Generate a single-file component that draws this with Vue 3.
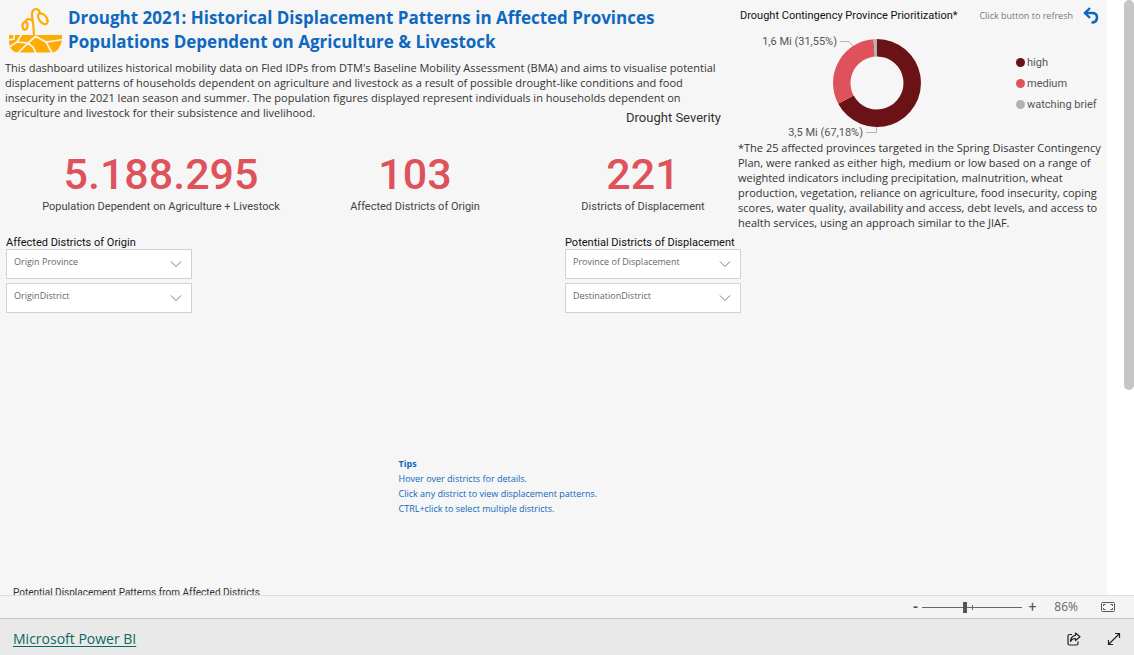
<script setup>
import { ref } from 'vue'

const metrics = [
  { value: '5.188.295', label: 'Population Dependent on Agriculture + Livestock' },
  { value: '103', label: 'Affected Districts of Origin' },
  { value: '221', label: 'Districts of Displacement' },
]

const slicerGroups = [
  {
    title: 'Affected Districts of Origin',
    fields: [
      { id: 'origin-province', name: 'Origin Province' },
      { id: 'origin-district', name: 'OriginDistrict' },
    ],
  },
  {
    title: 'Potential Districts of Displacement',
    fields: [
      { id: 'displacement-province', name: 'Province of Displacement' },
      { id: 'destination-district', name: 'DestinationDistrict' },
    ],
  },
]

const segments = [
  { name: 'high', from: 0, to: 67.18, color: '#6b1216' },
  { name: 'medium', from: 67.18, to: 98.73, color: '#de535b' },
  { name: 'watching brief', from: 98.73, to: 100, color: '#b3b3b3' },
]

const center = { x: 139, y: 55 }

function point(percent, radius) {
  const angle = (percent / 100) * 2 * Math.PI
  return `${center.x + radius * Math.sin(angle)} ${center.y - radius * Math.cos(angle)}`
}

function ringSlice({ from, to }, outer = 44, inner = 26.5) {
  const large = to - from > 50 ? 1 : 0
  return `M${point(from, outer)}A${outer} ${outer} 0 ${large} 1 ${point(to, outer)}`
    + `L${point(to, inner)}A${inner} ${inner} 0 ${large} 0 ${point(from, inner)}Z`
}

const zoom = ref(86)
</script>

<template>
  <div class="app">
    <main class="viewport">
      <div class="canvas">
        <section class="primary">
          <header class="heading">
            <svg class="logo" viewBox="0 0 55 48" aria-hidden="true">
              <g fill="none" stroke="#ffab00" stroke-width="2.200" stroke-linecap="round">
                <path d="M26 29C26 21 24.500 15 24 10C23.500 5 25.500 3 28 3C30.500 3 31.500 5 32 7.500" />
                <path d="M24 14.500C21 12 17.500 13 17.500 16.500" />
                <path d="M31.500 7.500C36 7 40.500 12 39.500 16.500C38.500 19.500 34 18 31.500 14.500C29.500 11 29.500 8 31.500 7.500Z" />
                <path d="M17.500 15.500C20.500 17.500 20 22 17.500 23.500C15.500 24.500 14.500 22 14.500 19.500C14.500 17.500 16 16 17.500 15.500Z" />
              </g>
              <path d="M1 29H54V34C53 40 49 46.500 44 46.500H10C5 46.500 1 42 1 35Z" fill="#ffab00" />
              <path
                d="M0 34L6 33L6 29M14 28L9 36L0 42M9 36L20 37M28 30L20 37L10 47M20 37L25 41L28 47M27 30L38 36L55 33.500M38 36L44 47"
                fill="none" stroke="#f5f5f5" stroke-width="1.700"
              />
            </svg>
            <h1>Drought 2021: Historical Displacement Patterns in Affected Provinces<br>Populations Dependent on Agriculture &amp; Livestock</h1>
          </header>

          <p class="intro">
            This dashboard utilizes historical mobility data on Fled IDPs from DTM's Baseline Mobility Assessment (BMA) and aims to visualise potential<br>
            displacement patterns of households dependent on agriculture and livestock as a result of possible drought-like conditions and food<br>
            insecurity in the 2021 lean season and summer. The population figures displayed represent individuals in households dependent on<br>
            agriculture and livestock for their subsistence and livelihood.
          </p>
          <p class="severity">Drought Severity</p>

          <div class="metrics">
            <div v-for="m in metrics" :key="m.label" class="metric">
              <strong>{{ m.value }}</strong>
              <span>{{ m.label }}</span>
            </div>
          </div>

          <div class="slicers">
            <section v-for="group in slicerGroups" :key="group.title" class="slicer-group">
              <h2>{{ group.title }}</h2>
              <div v-for="field in group.fields" :key="field.id" class="slicer">
                <select :id="field.id" :aria-label="field.name">
                  <option>{{ field.name }}</option>
                </select>
                <svg viewBox="0 0 12 8" aria-hidden="true">
                  <path d="M1 1.500L6 6.500L11 1.500" fill="none" stroke="#777" />
                </svg>
              </div>
            </section>
          </div>

          <aside class="tips">
            <strong>Tips</strong>
            <p>Hover over districts for details.</p>
            <p>Click any district to view displacement patterns.</p>
            <p>CTRL+click to select multiple districts.</p>
          </aside>

          <h2 class="patterns">Potential Displacement Patterns from Affected Districts</h2>
        </section>

        <section class="secondary">
          <header class="chart-head">
            <h2>Drought Contingency Province Prioritization*</h2>
            <span>Click button to refresh</span>
            <button type="button" class="refresh" aria-label="Refresh">
              <svg viewBox="0 0 16 17" aria-hidden="true">
                <path d="M1.500 6H9C12.500 6 14 8 14 10.500C14 13.500 12 15.500 8.500 15.500" fill="none" stroke="#0f68bf" stroke-width="2.600" />
                <path d="M7 1L2 6L7 11" fill="none" stroke="#0f68bf" stroke-width="2.400" />
              </svg>
            </button>
          </header>

          <div class="chart">
            <svg class="donut" viewBox="0 0 270 112" role="img" aria-label="Population by priority">
              <path v-for="s in segments" :key="s.name" :d="ringSlice(s)" :fill="s.color" />
              <path d="M102 13.500H111L115 18M128 104.500H138.500V99" fill="none" stroke="#b3b3b3" />
              <text x="99" y="17" text-anchor="end">1,6 Mi (31,55%)</text>
              <text x="125" y="108" text-anchor="end">3,5 Mi (67,18%)</text>
            </svg>
            <ul class="legend">
              <li v-for="s in segments" :key="s.name"><i :style="{ background: s.color }"></i>{{ s.name }}</li>
            </ul>
          </div>

          <p class="note">
            *The 25 affected provinces targeted in the Spring Disaster Contingency<br>
            Plan, were ranked as either high, medium or low based on a range of<br>
            weighted indicators including precipitation, malnutrition, wheat<br>
            production, vegetation, reliance on agriculture, food insecurity, coping<br>
            scores, water quality, availability and access, debt levels, and access to<br>
            health services, using an approach similar to the JIAF.
          </p>
        </section>
      </div>
      <div class="scroll"><div class="thumb"></div></div>
    </main>

    <div class="zoombar">
      <button type="button" class="step" aria-label="Zoom out">-</button>
      <div class="range">
        <input v-model="zoom" type="range" min="10" max="188" aria-label="Zoom level">
      </div>
      <button type="button" aria-label="Zoom in">+</button>
      <output>{{ zoom }}%</output>
      <button type="button" aria-label="Fit to page">
        <svg width="14" height="10" viewBox="0 0 14 10" fill="none" stroke="#555" aria-hidden="true">
          <rect x=".5" y=".5" width="13" height="9" rx="1" />
          <path d="M4.500 2.500H2.500V4M2.500 6V7.500H4.500M9.500 2.500H11.500V4M11.500 6V7.500H9.500" />
        </svg>
      </button>
    </div>

    <footer class="footer">
      <a href="#">Microsoft Power BI</a>
      <div class="actions">
        <button type="button" aria-label="Share">
          <svg width="14" height="14" viewBox="0 0 14 14" fill="none" stroke="#222" stroke-width="1.200" aria-hidden="true">
            <path d="M5 2.500H2.500Q1 2.500 1 4V11.500Q1 13 2.500 13H9.500Q11 13 11 11.500V9.500" />
            <path d="M8.500 1L13 4.800L8.500 8.500V6.500Q5 6.300 3.500 9.500Q3.800 3.800 8.500 3.300Z" stroke-linejoin="round" />
          </svg>
        </button>
        <button type="button" aria-label="Full screen">
          <svg width="14" height="14" viewBox="0 0 14 14" fill="none" stroke="#222" stroke-width="1.200" aria-hidden="true">
            <path d="M1.500 12.500L12.500 1.500M8 1.500H12.500V6M1.500 8V12.500H6" />
          </svg>
        </button>
      </div>
    </footer>
  </div>
</template>

<style>
body { margin: 0; }
</style>

<style scoped>
.app {
  --ui: "Open Sans", "Noto Sans", sans-serif;
  --din: Roboto, "Liberation Sans", sans-serif;
  display: flex;
  flex-direction: column;
  height: 100vh;
  overflow: hidden;
  background: #fff;
  color: #333;
  font-family: var(--din);
  font-size: 11px;
}
h1, h2, p, ul { margin: 0; padding: 0; font-weight: 400; }
button { border: 0; padding: 0; background: none; color: #555; font: inherit; }
button svg { display: block; }
.viewport { display: flex; flex: 1; min-height: 0; }
.canvas {
  display: grid;
  grid-template-columns: 2fr 1fr;
  flex: 1;
  min-width: 0;
  overflow: hidden;
  background: #f6f6f6;
}
.primary, .secondary { min-width: 0; white-space: nowrap; }
.scroll { display: flex; justify-content: flex-end; width: 27px; }
.thumb { width: 10px; height: 390px; border-radius: 5px; background: #c6c6c6; }

.heading { display: flex; gap: 5px; padding: 6px 0 0 8px; }
.logo { width: 55px; height: 48px; flex: none; }
h1 { color: #0f68bf; font: 700 17px/24px var(--ui); }
.intro { padding: 6px 0 0 5px; font: 11px/15px var(--ui); }
.severity { margin-top: -10px; padding-right: 17px; text-align: right; font-size: 13px; line-height: 16px; }

.metrics { display: grid; grid-template-columns: 322fr 186fr 230fr; margin-top: 22px; }
.metric { display: flex; flex-direction: column; align-items: center; color: #444; }
.metric:last-child { padding-left: 40px; }
.metric strong { color: #de535b; font-size: 43px; font-weight: 500; line-height: 52px; }
.metric span { font-size: 11px; line-height: 14px; }

.slicers { display: flex; justify-content: space-between; margin-top: 22px; padding-left: 6px; }
.slicer-group { width: 186px; }
.slicer-group:last-child { width: 176px; margin-right: -3px; }
.slicer-group h2 { color: #111; font-size: 11px; line-height: 13px; }
.slicer { position: relative; margin-bottom: 4px; }
.slicer select {
  display: block;
  width: 100%;
  height: 30px;
  padding: 0 30px 4px 7px;
  border: 1px solid #d2d2d2;
  border-radius: 0;
  background: #fff;
  color: #666;
  font: 9px/14px var(--ui);
  appearance: none;
}
.slicer svg { position: absolute; top: 11px; right: 10px; width: 12px; height: 8px; pointer-events: none; }

.tips { margin: 139px 0 0 54%; color: #0f68bf; font: 9px/15px var(--ui); }
.patterns { margin-top: 70px; padding-left: 13px; font-size: 10px; line-height: 14px; }

.chart-head { display: flex; align-items: center; height: 31px; padding: 0 8px 0 2px; }
.chart-head h2 { color: #111; font-size: 11px; }
.chart-head span { margin-left: auto; color: #777; font: 9px/14px var(--ui); }
.refresh { margin-left: 10px; }
.refresh svg { width: 16px; height: 17px; }
.chart { display: flex; height: 109px; margin-top: -3px; }
.donut { width: 270px; height: 112px; flex: none; }
.donut text { fill: #555; font-size: 11px; }
.legend { padding: 24px 0 0 8px; color: #555; font-size: 11px; line-height: 21px; list-style: none; }
.legend li { display: flex; align-items: center; gap: 2px; }
.legend i { width: 9px; height: 9px; border-radius: 50%; }
.note { padding-top: 3px; font: 11px/15px var(--ui); }

.zoombar {
  display: flex;
  align-items: center;
  justify-content: flex-end;
  height: 22px;
  padding-right: 19px;
  border-top: 1px solid #dedede;
  border-bottom: 1px solid #c6c6c6;
  background: #f4f4f4;
  color: #666;
  font-size: 14px;
}
.step { font-weight: 700; }
.range { position: relative; width: 100px; height: 12px; margin: 0 6px 0 4px; }
.range::after { content: ""; position: absolute; top: 4px; left: 50%; width: 1px; height: 5px; background: #666; }
.range input { display: block; width: 100%; height: 12px; margin: 0; appearance: none; background: linear-gradient(#666, #666) center / 100% 1px no-repeat; }
.range input::-webkit-slider-thumb { width: 4px; height: 11px; appearance: none; border-radius: 0; background: #555; }
.zoombar output { margin: 0 23px 0 18px; font: 12px/18px var(--ui); }

.footer {
  display: flex;
  align-items: center;
  justify-content: space-between;
  height: 36px;
  padding: 4px 13px 0;
  box-sizing: border-box;
  background: #e9e9e9;
}
.footer a { color: #0b6a5d; font: 14px/20px var(--ui); text-decoration: underline; text-underline-offset: 2px; }
.actions { display: flex; gap: 26px; }
</style>
